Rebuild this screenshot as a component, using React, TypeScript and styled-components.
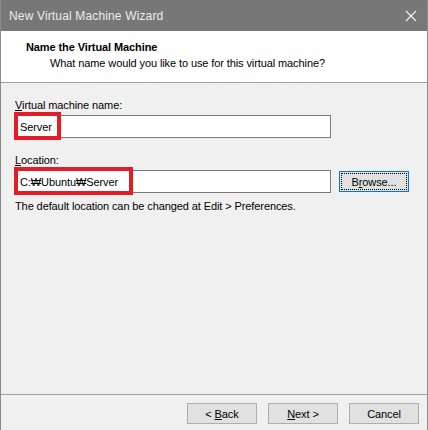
import React from "react";
import styled, { createGlobalStyle } from "styled-components";

const Global = createGlobalStyle`
  html, body { margin: 0; padding: 0; background: #ffffff; }
  body {
    font-family: "Liberation Sans", Arial, sans-serif;
    font-size: 11px;
    letter-spacing: -0.1px;
    color: #000;
  }
  * { box-sizing: border-box; }
`;

const Window = styled.div`
  width: 428px;
  height: 430px;
  display: flex;
  flex-direction: column;
  background: #f0f0f0;
  border-left: 1px solid #8c8c8c;
  border-right: 1px solid #8c8c8c;
  overflow: hidden;
`;

const TitleBar = styled.div`
  height: 31px;
  margin: 0 -1px;
  background: #777777;
  color: #ececec;
  display: flex;
  align-items: center;
  justify-content: space-between;
  padding: 0 8px 0 9px;
  font-size: 12px;
  letter-spacing: 0.15px;
  flex-shrink: 0;
`;

const CloseIcon = styled.svg`
  width: 12px;
  height: 12px;
  margin-right: 3px;
`;

const Header = styled.div`
  height: 52px;
  background: #ffffff;
  border-bottom: 1px solid #a0a0a0;
  padding: 9px 0 0 25px;
  flex-shrink: 0;
`;

const HeaderTitle = styled.div`
  font-weight: bold;
  line-height: 15px;
`;

const HeaderSub = styled.div`
  padding-left: 24px;
  margin-top: 1px;
  line-height: 15px;
`;

const Content = styled.div`
  flex: 1;
  padding: 15px 0 0 14px;
  display: flex;
  flex-direction: column;
`;

const Label = styled.div<{ $top?: number }>`
  line-height: 15px;
  margin-top: ${(p) => p.$top ?? 0}px;
`;

const Row = styled.div`
  display: flex;
  align-items: center;
  gap: 8px;
  margin-top: 2px;
`;

const FieldWrap = styled.div`
  position: relative;
  width: 316px;
  height: 23px;
`;

const TextBox = styled.div`
  width: 100%;
  height: 100%;
  background: #ffffff;
  border: 1px solid #7a7a7a;
  padding: 0 4px;
  display: flex;
  align-items: center;
  white-space: nowrap;
`;

const Highlight = styled.div<{ $w: number }>`
  position: absolute;
  left: -1px;
  top: -3px;
  width: ${(p) => p.$w}px;
  height: 28px;
  border: 4px solid #e31c25;
  pointer-events: none;
`;

const Button = styled.div<{ $focus?: boolean }>`
  width: 70px;
  height: 21px;
  background: #e1e1e1;
  border: 1px solid ${(p) => (p.$focus ? "#0078d7" : "#adadad")};
  display: flex;
  align-items: center;
  justify-content: center;
  position: relative;
  white-space: pre;
  ${(p) =>
    p.$focus
      ? `&::after { content: ""; position: absolute; inset: 1px; border: 1px dotted #000; }`
      : ""}
`;

const Info = styled.div`
  margin-top: 6px;
  line-height: 15px;
`;

const Footer = styled.div`
  height: 36px;
  border-top: 1px solid #a0a0a0;
  display: flex;
  justify-content: flex-end;
  gap: 11px;
  padding: 8px 8px 0 0;
  flex-shrink: 0;
`;

const U = styled.span`
  text-decoration: underline;
`;

export default function App() {
  return (
    <>
      <Global />
      <Window>
        <TitleBar>
          <span>New Virtual Machine Wizard</span>
          <CloseIcon viewBox="0 0 12 12">
            <path d="M1 1 L11 11 M11 1 L1 11" stroke="#f2f2f2" strokeWidth="1.2" fill="none" />
          </CloseIcon>
        </TitleBar>
        <Header>
          <HeaderTitle>Name the Virtual Machine</HeaderTitle>
          <HeaderSub>What name would you like to use for this virtual machine?</HeaderSub>
        </Header>
        <Content>
          <Label>
            <U>V</U>irtual machine name:
          </Label>
          <Row>
            <FieldWrap>
              <TextBox>Server</TextBox>
              <Highlight $w={47} />
            </FieldWrap>
          </Row>
          <Label $top={15}>
            <U>L</U>ocation:
          </Label>
          <Row>
            <FieldWrap>
              <TextBox>C:₩Ubuntu₩Server</TextBox>
              <Highlight $w={119} />
            </FieldWrap>
            <Button $focus>
              B<U>r</U>owse...
            </Button>
          </Row>
          <Info>The default location can be changed at Edit &gt; Preferences.</Info>
        </Content>
        <Footer>
          <Button>
            {"< "}<U>B</U>ack
          </Button>
          <Button>
            <U>N</U>ext{" >"}
          </Button>
          <Button>Cancel</Button>
        </Footer>
      </Window>
    </>
  );
}
